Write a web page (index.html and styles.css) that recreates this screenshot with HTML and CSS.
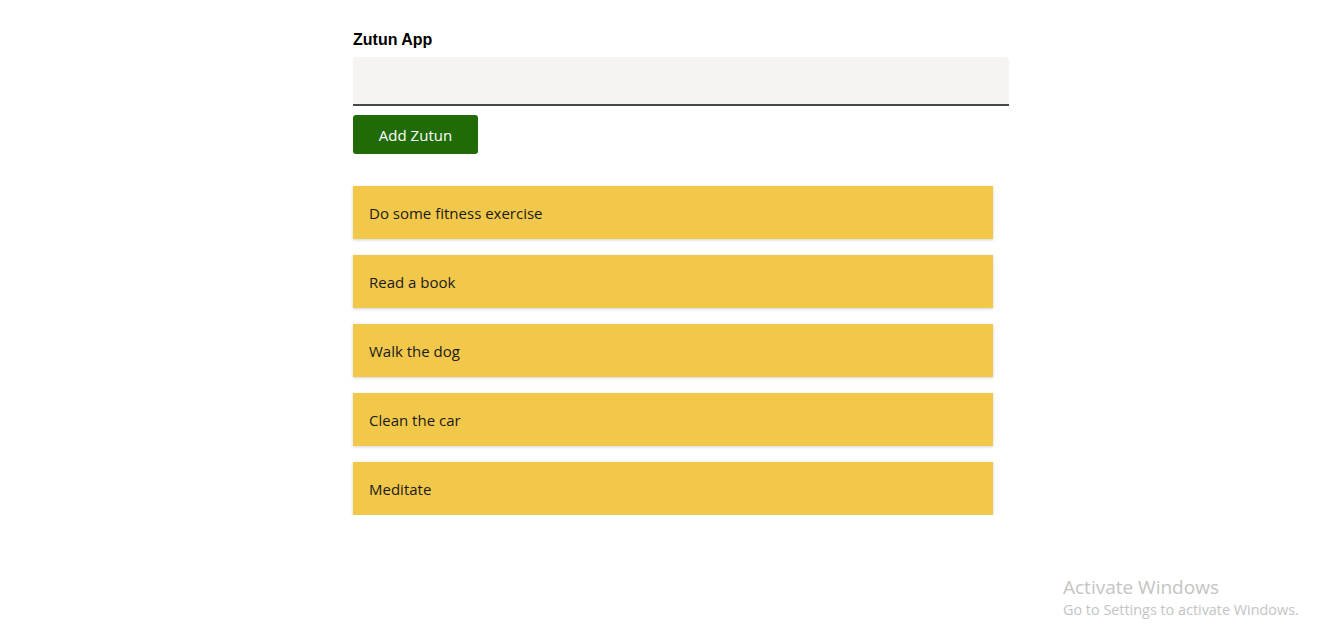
FILE: index.html
```html
<!DOCTYPE html>
<html>
<head>
<meta charset="utf-8">
<link rel="stylesheet" href="styles.css">
</head>
<body>
<main class="app">
  <h1 class="title">Zutun App</h1>
  <input class="field" type="text">
  <button class="add">Add Zutun</button>
  <ul class="list">
    <li class="item">Do some fitness exercise</li>
    <li class="item">Read a book</li>
    <li class="item">Walk the dog</li>
    <li class="item">Clean the car</li>
    <li class="item">Meditate</li>
  </ul>
</main>
<div class="watermark">
  <div class="wm-title">Activate Windows</div>
  <div class="wm-sub">Go to Settings to activate Windows.</div>
</div>
</body>
</html>
```

FILE: styles.css
```css
html, body {
  margin: 0;
  padding: 0;
  background: #fff;
  font-family: "Open Sans", "Noto Sans", sans-serif;
}
.app {
  width: 656px;
  margin: 0 0 0 353px;
  padding-top: 31px;
  display: flex;
  flex-direction: column;
  align-items: flex-start;
}
.title {
  font-family: "Liberation Sans", Arial, sans-serif;
  font-weight: bold;
  font-size: 16px;
  margin: 0 0 8px 0;
  line-height: 18px;
  color: #000;
}
.field {
  box-sizing: border-box;
  width: 656px;
  height: 49px;
  border: none;
  border-bottom: 2px solid #4a4844;
  border-radius: 4px 4px 0 0;
  background: #f5f4f0;
  margin: 0;
  outline: none;
}
.add {
  margin-top: 9px;
  width: 125px;
  height: 39px;
  background: #216b07;
  color: #fff;
  border: none;
  border-radius: 3px;
  font-family: "Open Sans", sans-serif;
  font-size: 15px;
  cursor: pointer;
}
.list {
  list-style: none;
  margin: 32px 0 0 0;
  padding: 0;
  display: flex;
  flex-direction: column;
  gap: 16px;
}
.item {
  box-sizing: border-box;
  width: 640px;
  height: 53px;
  background: #f2c84b;
  box-shadow: 0 1px 3px rgba(0,0,0,0.18);
  padding: 0 16px;
  display: flex;
  align-items: center;
  font-size: 15px;
  color: #1a1a1a;
}
.watermark {
  position: absolute;
  left: 1063px;
  top: 575px;
  color: #c4c4c4;
  font-family: "Open Sans", sans-serif;
}
.wm-title {
  font-size: 19px;
  line-height: 25px;
}
.wm-sub {
  font-size: 14.4px;
  line-height: 20px;
}
```
